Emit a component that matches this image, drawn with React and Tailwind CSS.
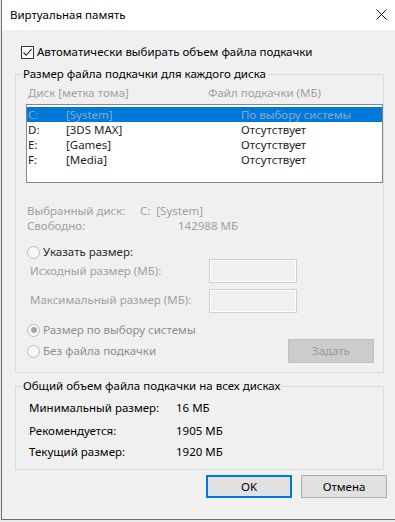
import React from 'react'

const font = { fontFamily: '"Noto Sans", "Open Sans", sans-serif' }

const Radio = ({ checked, children, textClass }) => (
  <div className="flex items-center h-[14px]">
    <span className="w-[13px] h-[13px] rounded-full border border-[#bcbcbc] bg-[#f7f7f7] flex items-center justify-center shrink-0">
      {checked && <span className="w-[6px] h-[6px] rounded-full bg-[#a6a6a6]" />}
    </span>
    <span className={`ml-[3px] leading-[14px] ${textClass}`}>{children}</span>
  </div>
)

const rows = [
  { d: 'C:', l: '[System]', f: 'По выбору системы', sel: true },
  { d: 'D:', l: '[3DS MAX]', f: 'Отсутствует' },
  { d: 'E:', l: '[Games]', f: 'Отсутствует' },
  { d: 'F:', l: '[Media]', f: 'Отсутствует' },
]

export default function App() {
  return (
    <div className="w-[395px] h-[522px] bg-[#e9e9e9] overflow-hidden text-[11.5px] text-black" style={font}>
      <div className="ml-[1px] h-[520px] border-l border-b border-[#6e6e6e] bg-[#f0f0f0] flex flex-col">
        {/* Title bar */}
        <div className="h-[30px] bg-white flex items-center justify-between pl-[8px] pr-[8px] shrink-0">
          <span className="text-[11.5px] text-black">Виртуальная память</span>
          <svg width="11" height="11" viewBox="0 0 11 11" className="mb-[2px]">
            <path d="M0.5 0.5L10.5 10.5M10.5 0.5L0.5 10.5" stroke="#111" strokeWidth="1" />
          </svg>
        </div>

        {/* Auto checkbox */}
        <div className="mt-[15px] ml-[19px] flex items-center h-[14px]">
          <span className="w-[13px] h-[13px] border border-[#333] bg-white flex items-center justify-center">
            <svg width="11" height="11" viewBox="0 0 11 11">
              <path d="M1.5 5.5L4.2 8.3L9.6 2.2" stroke="#222" strokeWidth="1.1" fill="none" />
            </svg>
          </span>
          <span className="ml-[3px] leading-[14px]">Автоматически выбирать объем файла подкачки</span>
        </div>

        {/* Group 1 */}
        <fieldset className="mt-[7px] ml-[13px] w-[369px] border border-[#dcdcdc] pb-[9px]">
          <legend className="ml-[6px] px-[1px] h-[16px] leading-[16px]">Размер файла подкачки для каждого диска</legend>

          <div className="mt-[3px] ml-[12px] flex h-[15px] leading-[15px] text-[#a0a0a0]">
            <span className="w-[180px]">Диск [метка тома]</span>
            <span>Файл подкачки (МБ)</span>
          </div>

          <div className="mt-[4px] ml-[10px] w-[357px] h-[79px] border border-[#828790] bg-white pt-[2px]">
            {rows.map((r) => (
              <div
                key={r.d}
                className={`flex h-[15px] leading-[15px] ${r.sel ? 'bg-[#0078d7] text-[#86abd6]' : 'text-[#1e1e1e]'}`}
              >
                <span className="w-[39px] pl-[1px]">{r.d}</span>
                <span className="w-[175px]">{r.l}</span>
                <span>{r.f}</span>
              </div>
            ))}
          </div>

          <div className="mt-[20px] ml-[11px] flex h-[15px] leading-[15px] text-[#a0a0a0]">
            <span className="w-[113px]">Выбранный диск:</span>
            <span>C:&nbsp; [System]</span>
          </div>
          <div className="ml-[11px] flex h-[15px] leading-[15px] text-[#a0a0a0]">
            <span className="w-[151px]">Свободно:</span>
            <span>142988 МБ</span>
          </div>

          <div className="mt-[12px] ml-[11px]">
            <Radio textClass="text-[#2a2a2a]">Указать размер:</Radio>
          </div>

          <div className="ml-[14px] flex items-center h-[24px] text-[#a0a0a0]">
            <span className="w-[179px]">Исходный размер (МБ):</span>
            <span className="w-[88px] h-[24px] border border-[#cfcfcf] shadow-[inset_0_0_0_1px_#ffffff]" />
          </div>
          <div className="mt-[6px] ml-[14px] flex items-center h-[24px] text-[#a0a0a0]">
            <span className="w-[179px] mb-[3px]">Максимальный размер (МБ):</span>
            <span className="w-[88px] h-[24px] border border-[#cfcfcf] shadow-[inset_0_0_0_1px_#ffffff]" />
          </div>

          <div className="mt-[10px] ml-[11px]">
            <Radio checked textClass="text-[#8e8e8e]">Размер по выбору системы</Radio>
          </div>
          <div className="mt-[2px] ml-[11px] flex items-center h-[24px]">
            <Radio textClass="text-[#8e8e8e]">Без файла подкачки</Radio>
            <button className="ml-auto mr-[9px] w-[86px] h-[24px] bg-[#cccccc] border border-[#bfbfbf] text-[#9a9a9a]">
              Задать
            </button>
          </div>
        </fieldset>

        {/* Group 2 */}
        <fieldset className="mt-[5px] ml-[13px] w-[369px] border border-[#dcdcdc] pb-[10px]">
          <legend className="ml-[6px] px-[1px] h-[16px] leading-[16px]">Общий объем файла подкачки на всех дисках</legend>
          <div className="mt-[6px] ml-[13px] flex h-[15px] leading-[15px]">
            <span className="w-[147px]">Минимальный размер:</span>
            <span>16 МБ</span>
          </div>
          <div className="mt-[8px] ml-[13px] flex h-[15px] leading-[15px]">
            <span className="w-[147px]">Рекомендуется:</span>
            <span>1905 МБ</span>
          </div>
          <div className="mt-[6px] ml-[13px] flex h-[15px] leading-[15px]">
            <span className="w-[147px]">Текущий размер:</span>
            <span>1920 МБ</span>
          </div>
        </fieldset>

        {/* Buttons */}
        <div className="mt-[5px] ml-[204px] flex gap-[9px]">
          <button className="w-[86px] h-[23px] bg-[#e1e1e1] border-2 border-[#0078d7] text-black">OK</button>
          <button className="w-[86px] h-[23px] bg-[#e1e1e1] border border-[#adadad] text-black">Отмена</button>
        </div>
      </div>
    </div>
  )
}
